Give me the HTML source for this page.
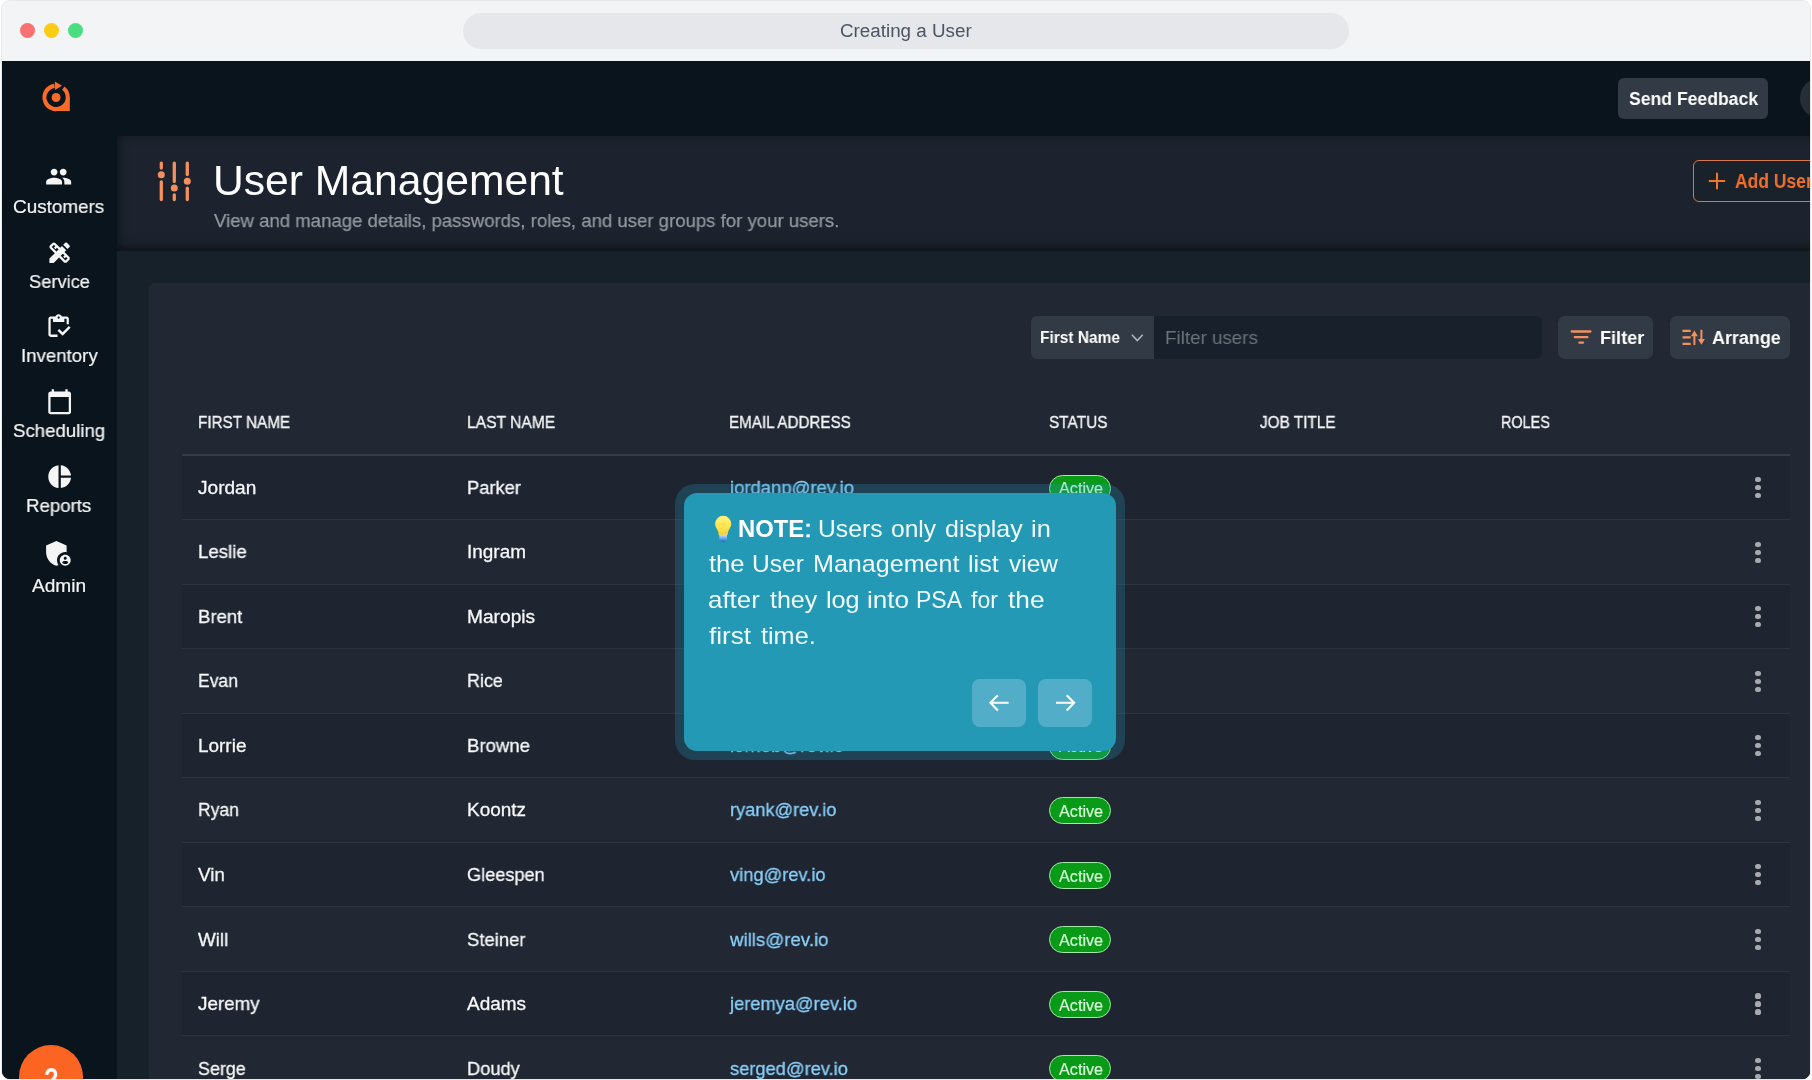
<!DOCTYPE html>
<html>
<head>
<meta charset="utf-8">
<title>Creating a User</title>
<style>
*{box-sizing:border-box;margin:0;padding:0}
html,body{width:1812px;height:1080px;overflow:hidden;background:#fff}
body{font-family:"Liberation Sans",sans-serif;position:relative;color:#fff}
.abs{position:absolute}
.t{position:absolute;white-space:nowrap;line-height:1;transform-origin:0 0;will-change:transform}
#win{position:absolute;left:1px;top:0;width:1810px;height:1080px;border:1px solid #e5e7eb;border-radius:9px;overflow:hidden;background:linear-gradient(#f3f4f6 0,#f3f4f6 60px,#0a141d 60px)}
#inner{position:absolute;left:-2px;top:-1px;width:1812px;height:1080px}
.dot{position:absolute;width:15px;height:15px;border-radius:50%;top:23px}
.kb{position:absolute;left:1755.4px;width:5.2px;height:5.2px;border-radius:50%;background:#a8aaad}
.badge{position:absolute;left:1049px;width:62px;height:27px;border-radius:14px;border:1px solid #a3e8a4;background:#099a18}
</style>
</head>
<body>
<div id="win"><div id="inner">
<div class="abs" style="left:2px;top:1px;width:1808px;height:60px;background:#f3f4f6;"></div>
<div class="dot" style="left:20px;background:#f87171"></div>
<div class="dot" style="left:44px;background:#facc15"></div>
<div class="dot" style="left:68px;background:#4ade80"></div>
<div class="abs" style="left:463px;top:13px;width:886px;height:36px;background:#e5e7eb;border-radius:18px"></div>
<div class="t" style="left:840.07px;top:23.00px;font-size:17.77px;color:#4b5563;transform:scaleX(1.0583);">Creating a User</div>
<div class="abs" style="left:2px;top:61px;width:1808px;height:1019px;background:#0a141d;"></div>
<div class="abs" style="left:117px;top:136px;width:1695px;height:944px;background:#17212a;"></div>
<svg class="abs" style="left:36px;top:76px;" width="40" height="40" viewBox="0 0 40 40"><g transform="translate(20.1 21.4)" fill="#f96b26"><path d="M7.17 -9.18 A11.65 11.65 0 1 1 -1.62 -11.54" fill="none" stroke="#f96b26" stroke-width="4.10"/><path d="M0 13.7 L13.7 13.7 L13.7 0 L12.7 0 A12.7 12.7 0 0 1 0 12.7 Z"/><path d="M-1.2 -16 L5.9 -11.7 L-1.2 -7.4 Z"/><circle cx="0" cy="0.1" r="4.45"/></g></svg>
<div class="abs" style="left:1618px;top:78px;width:150px;height:41px;background:#323a45;border-radius:6px"></div>
<div class="t" style="left:1628.62px;top:89.00px;font-size:18.99px;color:#fff;transform:scaleX(0.9268);font-weight:700;">Send Feedback</div>
<div class="abs" style="left:1800px;top:77.5px;width:40px;height:40px;background:#252d37;border-radius:50%"></div>
<div class="abs" style="left:117px;top:136px;width:1760px;height:115px;background:#1c232e;box-shadow:inset 0 -3px 12px rgba(0,0,0,.55)"></div>
<svg class="abs" style="left:150px;top:155px;" width="50" height="52" viewBox="150 155 50 52"><g stroke="#f4905e" stroke-width="3.3" stroke-linecap="round" fill="none"><line x1="161.3" y1="163.1" x2="161.3" y2="168"/><line x1="161.3" y1="181.8" x2="161.3" y2="199.6"/><line x1="174.3" y1="163.1" x2="174.3" y2="181.4"/><line x1="174.3" y1="194.8" x2="174.3" y2="199.6"/><line x1="187.3" y1="163.1" x2="187.3" y2="174.6"/><line x1="187.3" y1="188.2" x2="187.3" y2="199.6"/></g><g fill="#f4905e"><circle cx="161.3" cy="174.7" r="3.5"/><circle cx="174.3" cy="188" r="3.5"/><circle cx="187.3" cy="181.2" r="3.5"/></g></svg>
<div class="t" style="left:212.55px;top:159.00px;font-size:42.60px;color:#fff;transform:scaleX(1.0009);">User Management</div>
<div class="t" style="left:214.08px;top:212.00px;font-size:18.94px;color:#94989e;transform:scaleX(0.9809);-webkit-text-stroke:0.25px #94989e;">View and manage details, passwords, roles, and user groups for your users.</div>
<div class="abs" style="left:1693px;top:160px;width:140px;height:42px;background:#19212b;border:1px solid #d9764b;border-radius:6px"></div>
<svg class="abs" style="left:1707px;top:171px;" width="20" height="20" viewBox="0 0 20 20"><path d="M10 1.8V18.2M1.8 10H18.2" stroke="#f47529" stroke-width="2" fill="none"/></svg>
<div class="t" style="left:1735.36px;top:172.00px;font-size:19.74px;color:#f1702d;transform:scaleX(0.8865);font-weight:700;">Add User</div>
<svg class="abs" style="left:45.35px;top:163.45px;" width="27.3" height="27.3" viewBox="0 0 24 24"><path fill="#f5f5f5" d="M16 11c1.66 0 2.99-1.34 2.99-3S17.66 5 16 5c-1.66 0-3 1.34-3 3s1.34 3 3 3zm-8 0c1.66 0 2.99-1.34 2.99-3S9.66 5 8 5C6.34 5 5 6.34 5 8s1.34 3 3 3zm0 2c-2.33 0-7 1.17-7 3.5V19h14v-2.5c0-2.33-4.67-3.5-7-3.5zm8 0c-.29 0-.62.02-.97.05 1.16.84 1.97 1.97 1.97 3.45V19h6v-2.5c0-2.33-4.67-3.5-7-3.5z"/></svg>
<svg class="abs" style="left:45.85px;top:238.75px;" width="27.3" height="27.3" viewBox="0 0 24 24"><path fill="#f5f5f5" d="M16.24 11.51l1.57-1.57-3.75-3.75-1.57 1.57-4.14-4.13c-.78-.78-2.05-.78-2.83 0l-1.9 1.9c-.78.78-.78 2.05 0 2.83l4.13 4.13L3 17.25V21h3.75l4.76-4.76 4.13 4.13c.95.95 2.23.6 2.83 0l1.9-1.9c.78-.78.78-2.05 0-2.83l-4.13-4.13zm-7.06-.44L5.04 6.94l1.89-1.9L8.2 6.31 7.02 7.5l1.41 1.41 1.19-1.19 1.45 1.45-1.89 1.9zm7.88 7.89l-4.13-4.13 1.9-1.9 1.45 1.45-1.19 1.19 1.41 1.41 1.19-1.19 1.27 1.27-1.9 1.9zM20.71 7.04c.39-.39.39-1.02 0-1.41l-2.34-2.34c-.47-.47-1.12-.29-1.41 0l-1.83 1.83 3.75 3.75 1.83-1.83z"/></svg>
<svg class="abs" style="left:45.0969px;top:313.272px;" width="27.3" height="27.3" viewBox="0 0 24 24"><path fill="#f5f5f5" d="M5 5h2v3h10V5h2v5h2V5c0-1.1-.9-2-2-2h-4.18C14.4 1.84 13.3 1 12 1s-2.4.84-2.82 2H5c-1.1 0-2 .9-2 2v14c0 1.1.9 2 2 2h6v-2H5V5zm7-2c.55 0 1 .45 1 1s-.45 1-1 1-1-.45-1-1 .45-1 1-1zM21 11.5L15.51 17l-3.01-3L11 15.5l4.51 4.5L22.5 13z"/></svg>
<svg class="abs" style="left:45.55px;top:388.25px;" width="27.3" height="27.3" viewBox="0 0 24 24"><path fill="#f5f5f5" d="M20 3h-1V1h-2v2H7V1H5v2H4c-1.1 0-2 .9-2 2v16c0 1.1.9 2 2 2h16c1.1 0 2-.9 2-2V5c0-1.1-.9-2-2-2zm0 18H4V8h16v13z"/></svg>
<svg class="abs" style="left:45.85px;top:462.75px;" width="27.3" height="27.3" viewBox="0 0 24 24"><path fill="#f5f5f5" d="M11 2v20c-5.07-.5-9-4.79-9-10s3.930-9.500 9-10zm2.030 0v8.990H22c-.47-4.740-4.240-8.520-8.970-8.990zm0 11.010V22c4.740-.47 8.500-4.250 8.970-8.990h-8.970z"/></svg>
<svg class="abs" style="left:42.4px;top:537.3px;" width="32.8" height="32.8" viewBox="0 0 24 24"><path fill="#f5f5f5" d="M17 11c.34 0 .67.04 1 .09V6.27L10.5 3 3 6.27v4.910c0 4.540 3.200 8.790 7.500 9.820.55-.13 1.080-.32 1.600-.55-.69-.98-1.100-2.170-1.100-3.450 0-3.310 2.690-6 6-6zM17 13c-2.210 0-4 1.790-4 4s1.790 4 4 4 4-1.790 4-4-1.790-4-4-4zm0 1.380c.62 0 1.120.51 1.120 1.120s-.51 1.120-1.120 1.120-1.120-.51-1.120-1.120.5-1.120 1.120-1.120zm0 5.370c-.93 0-1.740-.46-2.240-1.170.05-.72 1.510-1.080 2.240-1.080s2.190.36 2.240 1.080c-.5.710-1.310 1.170-2.240 1.170z"/></svg>
<div class="t" style="left:13.46px;top:198.00px;font-size:18.94px;color:#f5f5f5;transform:scaleX(0.9964);-webkit-text-stroke:0.20px #f5f5f5;">Customers</div>
<div class="t" style="left:28.60px;top:273.00px;font-size:18.94px;color:#f5f5f5;transform:scaleX(0.9653);-webkit-text-stroke:0.20px #f5f5f5;">Service</div>
<div class="t" style="left:20.73px;top:347.00px;font-size:18.94px;color:#f5f5f5;transform:scaleX(0.9847);-webkit-text-stroke:0.20px #f5f5f5;">Inventory</div>
<div class="t" style="left:13.03px;top:422.00px;font-size:18.94px;color:#f5f5f5;transform:scaleX(0.9825);-webkit-text-stroke:0.20px #f5f5f5;">Scheduling</div>
<div class="t" style="left:26.43px;top:497.00px;font-size:18.94px;color:#f5f5f5;transform:scaleX(0.9848);-webkit-text-stroke:0.20px #f5f5f5;">Reports</div>
<div class="t" style="left:32.02px;top:577.00px;font-size:18.94px;color:#f5f5f5;transform:scaleX(1.0084);-webkit-text-stroke:0.20px #f5f5f5;">Admin</div>
<div class="abs" style="left:18.8px;top:1044.6px;width:64.4px;height:64.4px;background:#fb6521;border-radius:50%"></div>
<div class="t" style="left:43.66px;top:1064.00px;font-size:31.31px;color:#fff;transform:scaleX(0.7619);font-weight:700;">?</div>
<div class="abs" style="left:149.3px;top:282.8px;width:1680px;height:820px;background:#212833;border-radius:5px"></div>
<div class="abs" style="left:1031px;top:316px;width:123px;height:42.5px;background:#323a45;border-radius:6px 0 0 6px"></div>
<div class="abs" style="left:1153.5px;top:316px;width:388px;height:42.5px;background:#18212b;border-radius:0 6px 6px 0"></div>
<div class="t" style="left:1040.33px;top:329.00px;font-size:16.26px;color:#fff;transform:scaleX(0.9517);font-weight:700;">First Name</div>
<svg class="abs" style="left:1129px;top:331px;" width="16" height="14" viewBox="0 0 16 14"><path d="M2.9 3.8 L8.3 9.6 L13.7 3.8" stroke="#b3b7bc" stroke-width="1.5" fill="none"/></svg>
<div class="t" style="left:1164.61px;top:329.00px;font-size:18.89px;color:#6d727a;transform:scaleX(0.9942);">Filter users</div>
<div class="abs" style="left:1557.7px;top:316px;width:95.8px;height:42.5px;background:#323a45;border-radius:7px"></div>
<svg class="abs" style="left:1568px;top:326px;" width="26" height="22" viewBox="1568 326 26 22"><g stroke="#f4905e" stroke-width="2.3" stroke-linecap="round" fill="none"><path d="M1571.7 331.5H1590.4M1574.8 337.2H1587.4M1579.4 342.7H1583"/></g></svg>
<div class="t" style="left:1599.51px;top:328.00px;font-size:18.99px;color:#fff;transform:scaleX(0.9538);font-weight:700;">Filter</div>
<div class="abs" style="left:1669.8px;top:316px;width:120.2px;height:42.5px;background:#323a45;border-radius:7px"></div>
<svg class="abs" style="left:1680px;top:326px;" width="28" height="22" viewBox="1680 326 28 22"><g stroke="#f4905e" stroke-width="2.2" fill="none"><path d="M1682.5 330.8H1690.7M1682.5 337.3H1690.7M1682.5 343.9H1690.7"/><path d="M1694.4 344.9V334.5M1701.4 329.8V340.5" stroke-width="2"/></g><path d="M1694.4 330.6L1697.9 336.3H1690.9ZM1701.400 344.700L1697.900 339H1704.900Z" fill="#f4905e"/></svg>
<div class="t" style="left:1712.13px;top:328.00px;font-size:18.99px;color:#fff;transform:scaleX(0.9438);font-weight:700;">Arrange</div>
<div class="t" style="left:197.80px;top:415.00px;font-size:16.68px;color:#f3f4f5;transform:scaleX(0.9151);-webkit-text-stroke:0.35px #f3f4f5;">FIRST NAME</div>
<div class="t" style="left:466.60px;top:415.00px;font-size:16.68px;color:#f3f4f5;transform:scaleX(0.9368);-webkit-text-stroke:0.35px #f3f4f5;">LAST NAME</div>
<div class="t" style="left:729.30px;top:415.00px;font-size:16.68px;color:#f3f4f5;transform:scaleX(0.9112);-webkit-text-stroke:0.35px #f3f4f5;">EMAIL ADDRESS</div>
<div class="t" style="left:1048.80px;top:415.00px;font-size:16.68px;color:#f3f4f5;transform:scaleX(0.9230);-webkit-text-stroke:0.35px #f3f4f5;">STATUS</div>
<div class="t" style="left:1259.60px;top:415.00px;font-size:16.68px;color:#f3f4f5;transform:scaleX(0.9198);-webkit-text-stroke:0.35px #f3f4f5;">JOB TITLE</div>
<div class="t" style="left:1500.60px;top:415.00px;font-size:16.68px;color:#f3f4f5;transform:scaleX(0.8632);-webkit-text-stroke:0.35px #f3f4f5;">ROLES</div>
<div class="abs" style="left:182px;top:454px;width:1608px;height:2px;background:#343c48;"></div>
<div class="abs" style="left:182px;top:456px;width:1608px;height:63px;background:#1e2430;"></div>
<div class="abs" style="left:182px;top:519px;width:1608px;height:1px;background:#2c343f;"></div>
<div class="t" style="left:197.80px;top:479.00px;font-size:18.94px;color:#f7f8f9;transform:scaleX(1.0070);-webkit-text-stroke:0.30px #f7f8f9;">Jordan</div>
<div class="t" style="left:466.60px;top:479.00px;font-size:18.94px;color:#f7f8f9;transform:scaleX(0.9657);-webkit-text-stroke:0.30px #f7f8f9;">Parker</div>
<div class="t" style="left:730.20px;top:479.00px;font-size:18.94px;color:#8acffa;transform:scaleX(0.9747);-webkit-text-stroke:0.30px #8acffa;">jordanp@rev.io</div>
<div class="badge" style="top:474.5px"></div>
<div class="t" style="left:1058.50px;top:480.00px;font-size:16.12px;color:#dcffdd;transform:scaleX(1.0058);-webkit-text-stroke:0.15px #dcffdd;">Active</div>
<div class="kb" style="top:477.0px"></div>
<div class="kb" style="top:485.0px"></div>
<div class="kb" style="top:493.0px"></div>
<div class="abs" style="left:182px;top:584px;width:1608px;height:1px;background:#2c343f;"></div>
<div class="t" style="left:197.80px;top:543.00px;font-size:18.94px;color:#f7f8f9;transform:scaleX(0.9852);-webkit-text-stroke:0.30px #f7f8f9;">Leslie</div>
<div class="t" style="left:466.60px;top:543.00px;font-size:18.94px;color:#f7f8f9;transform:scaleX(0.9938);-webkit-text-stroke:0.30px #f7f8f9;">Ingram</div>
<div class="t" style="left:730.20px;top:543.00px;font-size:18.94px;color:#8acffa;transform:scaleX(0.9765);-webkit-text-stroke:0.30px #8acffa;">lesliei@rev.io</div>
<div class="badge" style="top:539.0px"></div>
<div class="t" style="left:1058.50px;top:545.00px;font-size:16.12px;color:#dcffdd;transform:scaleX(1.0058);-webkit-text-stroke:0.15px #dcffdd;">Active</div>
<div class="kb" style="top:541.6px"></div>
<div class="kb" style="top:549.6px"></div>
<div class="kb" style="top:557.6px"></div>
<div class="abs" style="left:182px;top:585px;width:1608px;height:63px;background:#1e2430;"></div>
<div class="abs" style="left:182px;top:648px;width:1608px;height:1px;background:#2c343f;"></div>
<div class="t" style="left:197.80px;top:608.00px;font-size:18.94px;color:#f7f8f9;transform:scaleX(0.9779);-webkit-text-stroke:0.30px #f7f8f9;">Brent</div>
<div class="t" style="left:466.60px;top:608.00px;font-size:18.94px;color:#f7f8f9;transform:scaleX(1.0119);-webkit-text-stroke:0.30px #f7f8f9;">Maropis</div>
<div class="t" style="left:730.20px;top:608.00px;font-size:18.94px;color:#8acffa;transform:scaleX(0.9803);-webkit-text-stroke:0.30px #8acffa;">brentm@rev.io</div>
<div class="badge" style="top:603.6px"></div>
<div class="t" style="left:1058.50px;top:609.00px;font-size:16.12px;color:#dcffdd;transform:scaleX(1.0058);-webkit-text-stroke:0.15px #dcffdd;">Active</div>
<div class="kb" style="top:606.1px"></div>
<div class="kb" style="top:614.1px"></div>
<div class="kb" style="top:622.1px"></div>
<div class="abs" style="left:182px;top:713px;width:1608px;height:1px;background:#2c343f;"></div>
<div class="t" style="left:197.80px;top:672.00px;font-size:18.94px;color:#f7f8f9;transform:scaleX(0.9242);-webkit-text-stroke:0.30px #f7f8f9;">Evan</div>
<div class="t" style="left:466.60px;top:672.00px;font-size:18.94px;color:#f7f8f9;transform:scaleX(0.9462);-webkit-text-stroke:0.30px #f7f8f9;">Rice</div>
<div class="t" style="left:730.20px;top:672.00px;font-size:18.94px;color:#8acffa;transform:scaleX(0.9574);-webkit-text-stroke:0.30px #8acffa;">evanr@rev.io</div>
<div class="badge" style="top:668.1px"></div>
<div class="t" style="left:1058.50px;top:674.00px;font-size:16.12px;color:#dcffdd;transform:scaleX(1.0058);-webkit-text-stroke:0.15px #dcffdd;">Active</div>
<div class="kb" style="top:670.7px"></div>
<div class="kb" style="top:678.7px"></div>
<div class="kb" style="top:686.7px"></div>
<div class="abs" style="left:182px;top:714px;width:1608px;height:63px;background:#1e2430;"></div>
<div class="abs" style="left:182px;top:777px;width:1608px;height:1px;background:#2c343f;"></div>
<div class="t" style="left:197.80px;top:737.00px;font-size:18.94px;color:#f7f8f9;transform:scaleX(0.9908);-webkit-text-stroke:0.30px #f7f8f9;">Lorrie</div>
<div class="t" style="left:466.60px;top:737.00px;font-size:18.94px;color:#f7f8f9;transform:scaleX(0.9795);-webkit-text-stroke:0.30px #f7f8f9;">Browne</div>
<div class="t" style="left:730.20px;top:737.00px;font-size:18.94px;color:#8acffa;transform:scaleX(0.9769);-webkit-text-stroke:0.30px #8acffa;">lorrieb@rev.io</div>
<div class="badge" style="top:732.6px"></div>
<div class="t" style="left:1058.50px;top:738.00px;font-size:16.12px;color:#dcffdd;transform:scaleX(1.0058);-webkit-text-stroke:0.15px #dcffdd;">Active</div>
<div class="kb" style="top:735.2px"></div>
<div class="kb" style="top:743.2px"></div>
<div class="kb" style="top:751.2px"></div>
<div class="abs" style="left:182px;top:842px;width:1608px;height:1px;background:#2c343f;"></div>
<div class="t" style="left:197.80px;top:801.00px;font-size:18.94px;color:#f7f8f9;transform:scaleX(0.9232);-webkit-text-stroke:0.30px #f7f8f9;">Ryan</div>
<div class="t" style="left:466.60px;top:801.00px;font-size:18.94px;color:#f7f8f9;transform:scaleX(0.9949);-webkit-text-stroke:0.30px #f7f8f9;">Koontz</div>
<div class="t" style="left:730.20px;top:801.00px;font-size:18.94px;color:#8acffa;transform:scaleX(0.9633);-webkit-text-stroke:0.30px #8acffa;">ryank@rev.io</div>
<div class="badge" style="top:797.1px"></div>
<div class="t" style="left:1058.50px;top:803.00px;font-size:16.12px;color:#dcffdd;transform:scaleX(1.0058);-webkit-text-stroke:0.15px #dcffdd;">Active</div>
<div class="kb" style="top:799.8px"></div>
<div class="kb" style="top:807.8px"></div>
<div class="kb" style="top:815.8px"></div>
<div class="abs" style="left:182px;top:843px;width:1608px;height:63px;background:#1e2430;"></div>
<div class="abs" style="left:182px;top:906px;width:1608px;height:1px;background:#2c343f;"></div>
<div class="t" style="left:197.80px;top:866.00px;font-size:18.94px;color:#f7f8f9;transform:scaleX(0.9928);-webkit-text-stroke:0.30px #f7f8f9;">Vin</div>
<div class="t" style="left:466.60px;top:866.00px;font-size:18.94px;color:#f7f8f9;transform:scaleX(0.9581);-webkit-text-stroke:0.30px #f7f8f9;">Gleespen</div>
<div class="t" style="left:730.20px;top:866.00px;font-size:18.94px;color:#8acffa;transform:scaleX(0.9670);-webkit-text-stroke:0.30px #8acffa;">ving@rev.io</div>
<div class="badge" style="top:861.7px"></div>
<div class="t" style="left:1058.50px;top:868.00px;font-size:16.12px;color:#dcffdd;transform:scaleX(1.0058);-webkit-text-stroke:0.15px #dcffdd;">Active</div>
<div class="kb" style="top:864.3px"></div>
<div class="kb" style="top:872.3px"></div>
<div class="kb" style="top:880.3px"></div>
<div class="abs" style="left:182px;top:971px;width:1608px;height:1px;background:#2c343f;"></div>
<div class="t" style="left:197.80px;top:931.00px;font-size:18.94px;color:#f7f8f9;transform:scaleX(0.9933);-webkit-text-stroke:0.30px #f7f8f9;">Will</div>
<div class="t" style="left:466.60px;top:931.00px;font-size:18.94px;color:#f7f8f9;transform:scaleX(0.9730);-webkit-text-stroke:0.30px #f7f8f9;">Steiner</div>
<div class="t" style="left:730.20px;top:931.00px;font-size:18.94px;color:#8acffa;transform:scaleX(0.9863);-webkit-text-stroke:0.30px #8acffa;">wills@rev.io</div>
<div class="badge" style="top:926.2px"></div>
<div class="t" style="left:1058.50px;top:932.00px;font-size:16.12px;color:#dcffdd;transform:scaleX(1.0058);-webkit-text-stroke:0.15px #dcffdd;">Active</div>
<div class="kb" style="top:928.9px"></div>
<div class="kb" style="top:936.9px"></div>
<div class="kb" style="top:944.9px"></div>
<div class="abs" style="left:182px;top:972px;width:1608px;height:63px;background:#1e2430;"></div>
<div class="abs" style="left:182px;top:1035px;width:1608px;height:1px;background:#2c343f;"></div>
<div class="t" style="left:197.80px;top:995.00px;font-size:18.94px;color:#f7f8f9;transform:scaleX(0.9936);-webkit-text-stroke:0.30px #f7f8f9;">Jeremy</div>
<div class="t" style="left:466.60px;top:995.00px;font-size:18.94px;color:#f7f8f9;transform:scaleX(1.0025);-webkit-text-stroke:0.30px #f7f8f9;">Adams</div>
<div class="t" style="left:730.20px;top:995.00px;font-size:18.94px;color:#8acffa;transform:scaleX(0.9658);-webkit-text-stroke:0.30px #8acffa;">jeremya@rev.io</div>
<div class="badge" style="top:990.7px"></div>
<div class="t" style="left:1058.50px;top:997.00px;font-size:16.12px;color:#dcffdd;transform:scaleX(1.0058);-webkit-text-stroke:0.15px #dcffdd;">Active</div>
<div class="kb" style="top:993.4px"></div>
<div class="kb" style="top:1001.4px"></div>
<div class="kb" style="top:1009.4px"></div>
<div class="abs" style="left:182px;top:1100px;width:1608px;height:1px;background:#2c343f;"></div>
<div class="t" style="left:197.80px;top:1060.00px;font-size:18.94px;color:#f7f8f9;transform:scaleX(0.9438);-webkit-text-stroke:0.30px #f7f8f9;">Serge</div>
<div class="t" style="left:466.60px;top:1060.00px;font-size:18.94px;color:#f7f8f9;transform:scaleX(0.9635);-webkit-text-stroke:0.30px #f7f8f9;">Doudy</div>
<div class="t" style="left:730.20px;top:1060.00px;font-size:18.94px;color:#8acffa;transform:scaleX(0.9662);-webkit-text-stroke:0.30px #8acffa;">serged@rev.io</div>
<div class="badge" style="top:1055.3px"></div>
<div class="t" style="left:1058.50px;top:1061.00px;font-size:16.12px;color:#dcffdd;transform:scaleX(1.0058);-webkit-text-stroke:0.15px #dcffdd;">Active</div>
<div class="kb" style="top:1058.0px"></div>
<div class="kb" style="top:1066.0px"></div>
<div class="kb" style="top:1074.0px"></div>
<div class="abs" style="left:675px;top:484px;width:450px;height:276px;background:rgba(36,152,181,.27);border-radius:20px"></div>
<div class="abs" style="left:684px;top:493px;width:432.3px;height:258px;background:#2499b6;border-radius:13px"></div>
<svg class="abs" style="left:712px;top:513px;" width="22" height="31" viewBox="712 513 22 31"><defs><linearGradient id="by" x1="0" y1="0" x2="0" y2="1"><stop offset="0" stop-color="#fff27e"/><stop offset="0.6" stop-color="#fde54d"/><stop offset="1" stop-color="#f6cf35"/></linearGradient><linearGradient id="bb" x1="0" y1="0" x2="0" y2="1"><stop offset="0" stop-color="#c4e2fb"/><stop offset="0.45" stop-color="#6fb0ee"/><stop offset="1" stop-color="#1f62c6"/></linearGradient></defs><path d="M715.1 523.9a8.05 8.05 0 1 1 16.1 0c0 3.5-2.500 5.200-3.100 7.900l-.5 3.200h-8.900l-.5-3.200c-.6-2.700-3.100-4.400-3.100-7.900z" fill="url(#by)"/><path d="M719.300 534.800h7.700v3.800c0 2-1.700 3.400-3.850 3.400s-3.850-1.400-3.850-3.400z" fill="url(#bb)"/><path d="M720.5 525.500l1.300-2.200 1.350 1.700 1.350-1.700 1.300 2.200" stroke="#f3c93a" stroke-width="0.9" fill="none" opacity=".7"/></svg>
<div class="t" style="left:737.75px;top:518.00px;font-size:23.10px;color:#fff;transform:scaleX(1.0327);font-weight:700;">NOTE</div>
<div class="t" style="left:803.68px;top:518.00px;font-size:23.10px;color:#f3fafc;transform:scaleX(1.2778);-webkit-text-stroke:0.30px #f3fafc;">:</div>
<div class="t" style="left:817.92px;top:518.00px;font-size:22.99px;color:#f3fafc;transform:scaleX(1.0754);">Users</div>
<div class="t" style="left:890.73px;top:518.00px;font-size:22.99px;color:#f3fafc;transform:scaleX(1.0691);">only</div>
<div class="t" style="left:944.61px;top:518.00px;font-size:22.99px;color:#f3fafc;transform:scaleX(1.0860);">display</div>
<div class="t" style="left:1031.25px;top:518.00px;font-size:22.99px;color:#f3fafc;transform:scaleX(1.1025);">in</div>
<div class="t" style="left:709.38px;top:553.00px;font-size:22.99px;color:#f3fafc;transform:scaleX(1.1148);">the</div>
<div class="t" style="left:752.43px;top:553.00px;font-size:22.99px;color:#f3fafc;transform:scaleX(1.0674);">User</div>
<div class="t" style="left:812.55px;top:553.00px;font-size:22.99px;color:#f3fafc;transform:scaleX(1.0919);">Management</div>
<div class="t" style="left:967.65px;top:553.00px;font-size:22.99px;color:#f3fafc;transform:scaleX(1.0981);">list</div>
<div class="t" style="left:1008.77px;top:553.00px;font-size:22.99px;color:#f3fafc;transform:scaleX(1.0638);">view</div>
<div class="t" style="left:708.28px;top:589.00px;font-size:22.99px;color:#f3fafc;transform:scaleX(1.1249);">after</div>
<div class="t" style="left:769.69px;top:589.00px;font-size:22.99px;color:#f3fafc;transform:scaleX(1.0875);">they</div>
<div class="t" style="left:825.86px;top:589.00px;font-size:22.99px;color:#f3fafc;transform:scaleX(1.0955);">log</div>
<div class="t" style="left:867.00px;top:589.00px;font-size:22.99px;color:#f3fafc;transform:scaleX(1.1350);">into</div>
<div class="t" style="left:916.34px;top:589.00px;font-size:22.99px;color:#f3fafc;transform:scaleX(0.9909);">PSA</div>
<div class="t" style="left:970.62px;top:589.00px;font-size:22.99px;color:#f3fafc;transform:scaleX(1.0000);">for</div>
<div class="t" style="left:1008.47px;top:589.00px;font-size:22.99px;color:#f3fafc;transform:scaleX(1.1443);">the</div>
<div class="t" style="left:709.37px;top:625.00px;font-size:22.99px;color:#f3fafc;transform:scaleX(1.1370);">first</div>
<div class="t" style="left:761.09px;top:625.00px;font-size:22.99px;color:#f3fafc;transform:scaleX(1.0976);">time.</div>
<div class="abs" style="left:972px;top:679px;width:54px;height:48px;background:#52adc8;border-radius:8px"></div>
<div class="abs" style="left:1038px;top:679px;width:54px;height:48px;background:#52adc8;border-radius:8px"></div>
<svg class="abs" style="left:985px;top:691px;" width="28" height="24" viewBox="985 691 28 24"><path d="M1008.6 702.8H991M997.9 695.2L990.4 702.8L997.9 710.4" stroke="#fff" stroke-width="2.1" fill="none"/></svg>
<svg class="abs" style="left:1051px;top:691px;" width="28" height="24" viewBox="1051 691 28 24"><path d="M1056 702.8H1073.600M1066.700 695.200L1074.200 702.800L1066.700 710.400" stroke="#fff" stroke-width="2.100" fill="none"/></svg>
</div></div>
</body>
</html>
